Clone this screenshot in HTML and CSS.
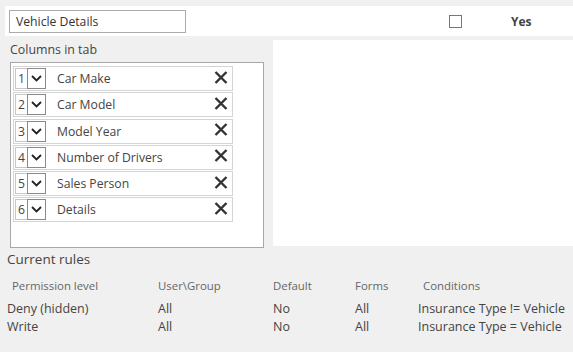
FILE: index.html
```html
<!DOCTYPE html>
<html lang="en">
<head>
    <meta charset="UTF-8">
    <title>Vehicle Details</title>
    <link rel="stylesheet" href="styles.css">
</head>
<body>
    <!-- Tab name bar -->
    <div class="tab-bar">
        <div class="tab-name">Vehicle Details</div>
        <span class="check"></span>
        <span class="yes">Yes</span>
    </div>

    <div class="main">
        <div class="columns">
            <div class="label">Columns in tab</div>
            <div class="col-list">
                <div class="col-row">
                    <div class="order"><span class="num">1</span><span class="arrow"><svg width="11" height="7" viewBox="0 0 11 7"><path d="M1 1 L5.5 5.5 L10 1" fill="none" stroke="#222" stroke-width="1.8"/></svg></span></div>
                    <span class="col-name">Car Make</span>
                    <svg class="remove" width="14" height="13" viewBox="0 0 14 13"><path d="M1.5 1 L12.5 12 M12.5 1 L1.5 12" stroke="#333" stroke-width="2.4"/></svg>
                </div>
                <div class="col-row">
                    <div class="order"><span class="num">2</span><span class="arrow"><svg width="11" height="7" viewBox="0 0 11 7"><path d="M1 1 L5.5 5.5 L10 1" fill="none" stroke="#222" stroke-width="1.8"/></svg></span></div>
                    <span class="col-name">Car Model</span>
                    <svg class="remove" width="14" height="13" viewBox="0 0 14 13"><path d="M1.5 1 L12.5 12 M12.5 1 L1.5 12" stroke="#333" stroke-width="2.4"/></svg>
                </div>
                <div class="col-row">
                    <div class="order"><span class="num">3</span><span class="arrow"><svg width="11" height="7" viewBox="0 0 11 7"><path d="M1 1 L5.5 5.5 L10 1" fill="none" stroke="#222" stroke-width="1.8"/></svg></span></div>
                    <span class="col-name">Model Year</span>
                    <svg class="remove" width="14" height="13" viewBox="0 0 14 13"><path d="M1.5 1 L12.5 12 M12.5 1 L1.5 12" stroke="#333" stroke-width="2.4"/></svg>
                </div>
                <div class="col-row">
                    <div class="order"><span class="num">4</span><span class="arrow"><svg width="11" height="7" viewBox="0 0 11 7"><path d="M1 1 L5.5 5.5 L10 1" fill="none" stroke="#222" stroke-width="1.8"/></svg></span></div>
                    <span class="col-name">Number of Drivers</span>
                    <svg class="remove" width="14" height="13" viewBox="0 0 14 13"><path d="M1.5 1 L12.5 12 M12.5 1 L1.5 12" stroke="#333" stroke-width="2.4"/></svg>
                </div>
                <div class="col-row">
                    <div class="order"><span class="num">5</span><span class="arrow"><svg width="11" height="7" viewBox="0 0 11 7"><path d="M1 1 L5.5 5.5 L10 1" fill="none" stroke="#222" stroke-width="1.8"/></svg></span></div>
                    <span class="col-name">Sales Person</span>
                    <svg class="remove" width="14" height="13" viewBox="0 0 14 13"><path d="M1.5 1 L12.5 12 M12.5 1 L1.5 12" stroke="#333" stroke-width="2.4"/></svg>
                </div>
                <div class="col-row">
                    <div class="order"><span class="num">6</span><span class="arrow"><svg width="11" height="7" viewBox="0 0 11 7"><path d="M1 1 L5.5 5.5 L10 1" fill="none" stroke="#222" stroke-width="1.8"/></svg></span></div>
                    <span class="col-name">Details</span>
                    <svg class="remove" width="14" height="13" viewBox="0 0 14 13"><path d="M1.5 1 L12.5 12 M12.5 1 L1.5 12" stroke="#333" stroke-width="2.4"/></svg>
                </div>
            </div>
        </div>
        <div class="panel"></div>
    </div>

    <!-- Rules -->
    <div class="rules">
        <div class="rules-title">Current rules</div>
        <div class="rules-grid">
            <div class="head first">Permission level</div>
            <div class="head">User\Group</div>
            <div class="head">Default</div>
            <div class="head">Forms</div>
            <div class="head last">Conditions</div>

            <div>Deny (hidden)</div>
            <div>All</div>
            <div>No</div>
            <div>All</div>
            <div>Insurance Type != Vehicle</div>

            <div>Write</div>
            <div>All</div>
            <div>No</div>
            <div>All</div>
            <div>Insurance Type = Vehicle</div>
        </div>
    </div>
</body>
</html>
```

FILE: styles.css
```css
body {
    margin: 0;
    background-color: #f0f0f0;
    font-family: "Open Sans", "Noto Sans", sans-serif;
    color: #444;
    font-size: 12.2px;
}

.tab-bar {
    margin: 6px 0 0 5px;
    height: 30px;
    background: white;
    display: flex;
    align-items: center;
}

.tab-name {
    margin-left: 4px;
    width: 169px;
    height: 21px;
    border: 1px solid #ababab;
    padding-left: 6px;
    line-height: 21px;
    font-size: 12.2px;
    color: #333;
}

.check {
    margin-left: 263px;
    width: 11px;
    height: 11px;
    border: 1px solid #777;
}

.yes {
    margin-left: 49px;
    font-weight: bold;
    color: #444;
    font-size: 12px;
}

.main {
    display: flex;
    margin-top: 1px;
}

.columns {
    width: 254px;
    padding-left: 10px;
}

.label {
    height: 25px;
    line-height: 25px;
    font-size: 12.4px;
    color: #444;
}

.col-list {
    height: 181px;
    border: 1px solid #a8a8a8;
    background: white;
    padding: 3px 0 0 2px;
    width: 250px;
}

.col-row {
    width: 218px;
    height: 23px;
    border: 1px solid #d4d4d4;
    margin-bottom: 1.3px;
    display: flex;
    align-items: center;
}

.order {
    display: flex;
    height: 21px;
    margin-left: 1px;
}

.num {
    width: 11px;
    border: 1px solid #c6c6c6;
    border-right: none;
    line-height: 20px;
    text-align: center;
    color: #444;
}

.arrow {
    width: 17px;
    border: 1px solid #8a8a8a;
    display: flex;
    align-items: center;
    justify-content: center;
}

.col-name {
    margin-left: 11px;
    flex: 1;
    color: #444;
}

.remove {
    margin-right: 4px;
    margin-top: -3px;
}

.panel {
    flex: 1;
    margin: 3px 0 0 9px;
    height: 206px;
    background: white;
}

.rules {
    padding-left: 7px;
}

.rules-title {
    font-size: 13.5px;
    height: 22px;
    line-height: 22px;
    color: #444;
}

.rules-grid {
    display: grid;
    grid-template-columns: 151px 115px 82px 63px 1fr;
    margin-top: 7px;
    line-height: 18px;
    font-size: 12.5px;
}

.head {
    font-size: 11.4px;
    color: #666;
    height: 23px;
}

.first {
    padding-left: 5px;
}

.last {
    padding-left: 5px;
}
```
